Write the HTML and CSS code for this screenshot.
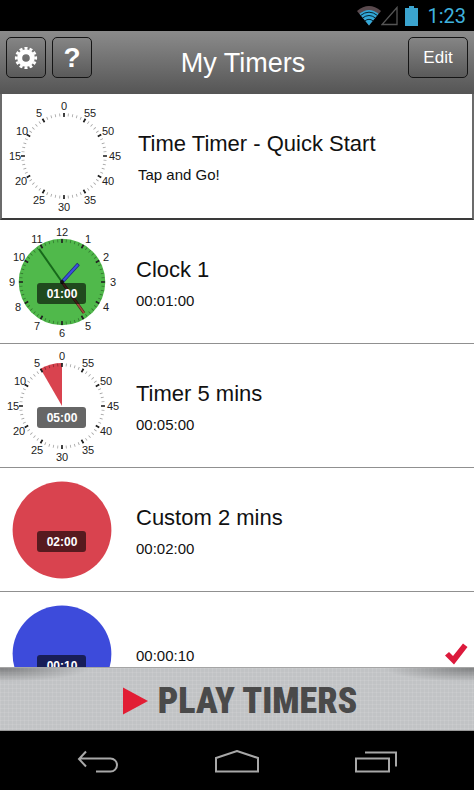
FILE: index.html
```html
<!DOCTYPE html>
<html lang="en">
<head>
<meta charset="utf-8">
<meta name="viewport" content="width=device-width, initial-scale=1">
<title>My Timers</title>
<link rel="stylesheet" href="styles.css">
</head>
<body>
<svg class="defs" aria-hidden="true">
  <defs>
    <g id="ticks">
      <circle r="41.2" pathLength="600" class="tick-minor"/>
      <circle r="41" pathLength="600" class="tick-major"/>
    </g>
    <g id="minutes" class="dial-num">
      <text x="0" y="-46">0</text><text x="26" y="-39">55</text><text x="44" y="-21">50</text>
      <text x="51" y="4">45</text><text x="44" y="29">40</text><text x="26" y="48">35</text>
      <text x="0" y="55">30</text><text x="-25" y="48">25</text><text x="-43" y="29">20</text>
      <text x="-49" y="4">15</text><text x="-42" y="-21">10</text><text x="-25" y="-39">5</text>
    </g>
  </defs>
</svg>

<div class="status">
  <svg width="24" height="20" viewBox="0 0 24 20" aria-label="Wi-Fi">
    <path d="M0 5 Q12 -5 24 5 L12 19.500Z" fill="#5a4a4e"/>
    <path d="M2.500 7.800 Q12 0 21.500 7.800 L12 19.500Z" fill="#33a8d8"/>
    <path d="M3.500 9.500 Q12 2.800 20.500 9.500 M5.500 12 Q12 7 18.500 12 M7.800 15 Q12 11.600 16.200 15" fill="none" stroke="#06222e" stroke-width="1"/>
  </svg>
  <svg width="17" height="20" viewBox="0 0 17 20" aria-label="No signal">
    <path d="M16 1.500V18.500H1Z" fill="none" stroke="#555" stroke-width="1.300"/>
  </svg>
  <svg class="battery" width="13" height="20" viewBox="0 0 13 20" aria-label="Battery">
    <path d="M4 0H9V2H13V20H0V2H4Z" fill="#3ba4cf"/>
  </svg>
  <span class="time">1:23</span>
</div>

<header class="header">
  <button class="btn icon-btn" aria-label="Settings">
    <svg width="24" height="24" viewBox="-12 -12 24 24">
      <circle r="6.300" fill="none" stroke="#fff" stroke-width="5"/>
      <circle r="9.700" fill="none" stroke="#fff" stroke-width="2.800" pathLength="120" stroke-dasharray="6 4" stroke-dashoffset="3"/>
    </svg>
  </button>
  <button class="btn icon-btn help" aria-label="Help">?</button>
  <h1>My Timers</h1>
  <button class="btn edit">Edit</button>
</header>

<main class="list">
  <button class="row quick">
    <svg class="dial" viewBox="-62 -60 124 120" aria-hidden="true">
      <use href="#ticks"/><use href="#minutes"/>
    </svg>
    <span class="info"><span class="name">Time Timer - Quick Start</span><span class="sub">Tap and Go!</span></span>
  </button>

  <button class="row">
    <svg class="dial" viewBox="-62 -60 124 120" aria-hidden="true">
      <circle r="43.300" fill="#50b94b"/>
      <use href="#ticks"/>
      <g class="dial-num">
        <text x="0" y="-46">12</text><text x="26" y="-39">1</text><text x="44" y="-21">2</text>
        <text x="51" y="4">3</text><text x="44" y="29">4</text><text x="26" y="48">5</text>
        <text x="0" y="55">6</text><text x="-25" y="48">7</text><text x="-44" y="29">8</text>
        <text x="-50" y="4">9</text><text x="-43" y="-21">10</text><text x="-25" y="-39">11</text>
      </g>
      <path d="M0 0L-23 -33" stroke="#17691b" stroke-width="2"/>
      <path d="M0 0L22 31" stroke="#4a2a1c" stroke-width="3"/>
      <path d="M0 0L22 31" stroke="#a1483a" stroke-width="1.600"/>
      <path d="M0 0L16.500 -18" stroke="#1e2c78" stroke-width="3.600"/>
      <path d="M1 -1L16 -17.500" stroke="#3c4fe0" stroke-width="2.200"/>
      <circle r="2" fill="#111"/>
      <rect class="pill" x="-25" y="1" width="49" height="21" rx="3"/>
      <text class="pill-text" x="0" y="16">01:00</text>
    </svg>
    <span class="info"><span class="name">Clock 1</span><span class="sub">00:01:00</span></span>
  </button>

  <button class="row">
    <svg class="dial" viewBox="-62 -60 124 120" aria-hidden="true">
      <path d="M0 0V-43A43 43 0 0 0 -21.500 -37.200Z" fill="#d9434f"/>
      <use href="#ticks"/><use href="#minutes"/>
      <rect class="pill" x="-25" y="1" width="49" height="21" rx="3"/>
      <text class="pill-text" x="0" y="16">05:00</text>
    </svg>
    <span class="info"><span class="name">Timer 5 mins</span><span class="sub">00:05:00</span></span>
  </button>

  <button class="row">
    <svg class="dial" viewBox="-62 -60 124 120" aria-hidden="true">
      <ellipse rx="49.400" ry="48.400" fill="#d9434f"/>
      <rect class="pill" x="-25" y="1" width="49" height="21" rx="3"/>
      <text class="pill-text" x="0" y="16">02:00</text>
    </svg>
    <span class="info"><span class="name">Custom 2 mins</span><span class="sub">00:02:00</span></span>
  </button>

  <button class="row">
    <svg class="dial" viewBox="-62 -60 124 120" aria-hidden="true">
      <ellipse rx="49.400" ry="48.400" fill="#3d4bdb"/>
      <rect class="pill" x="-25" y="1" width="49" height="21" rx="3"/>
      <text class="pill-text" x="0" y="16">00:10</text>
    </svg>
    <span class="info"><span class="sub">00:00:10</span></span>
    <svg class="check" width="24" height="22" viewBox="0 0 24 22" aria-label="Selected">
      <path d="M1 12.500L5 9L9 13L19 0.500L23.500 4L10 21.500Z" fill="#dc1a3c"/>
    </svg>
  </button>
</main>

<button class="play">
  <svg width="25" height="28" viewBox="0 0 25 28" aria-hidden="true"><path d="M0 0.500L25 14L0 27.500Z" fill="#e21d34"/></svg>
  <span>PLAY TIMERS</span>
</button>

<nav class="nav">
  <button aria-label="Back">
    <svg width="42" height="24" viewBox="0 0 42 24"><path d="M9 1.500L2 9L9 16.500M2 8.500H33.500A6.500 6.500 0 0 1 33.500 21.500H19"/></svg>
  </button>
  <button aria-label="Home">
    <svg width="46" height="24" viewBox="0 0 46 24"><path d="M2 21.500V8L23 1L44 8V21.500Z"/></svg>
  </button>
  <button aria-label="Recent apps">
    <svg width="44" height="24" viewBox="0 0 44 24"><path d="M2 8.500H35V21.500H2ZM11 2.500H42V16.500"/></svg>
  </button>
</nav>
</body>
</html>
```
FILE: styles.css
```css
* { box-sizing: border-box; }

body {
  margin: 0;
  height: 100vh;
  display: flex;
  flex-direction: column;
  overflow: hidden;
  background: #000;
  font-family: "Liberation Sans", Arial, sans-serif;
}

button {
  margin: 0;
  padding: 0;
  border: 0;
  background: none;
  color: inherit;
  font: inherit;
  cursor: pointer;
}

.defs { position: absolute; width: 0; height: 0; }

.status {
  flex: none;
  height: 31px;
  padding: 0 8px;
  display: flex;
  align-items: center;
  justify-content: flex-end;
  color: #3fb2de;
}
.battery { margin: 0 9px 0 7px; }
.time { font: 20px Roboto, sans-serif; }

.header {
  flex: none;
  height: 63px;
  padding: 6px;
  display: flex;
  align-items: flex-start;
  gap: 6px;
  color: #fff;
  background: linear-gradient(#8b8b8b, #555);
}
.header h1 {
  flex: 1;
  margin: 0;
  padding-right: 14px;
  align-self: center;
  text-align: center;
  font-size: 27px;
  line-height: 32px;
  font-weight: 400;
}
.btn {
  height: 41px;
  display: flex;
  align-items: center;
  justify-content: center;
  border: 1px solid #151515;
  border-radius: 5px;
  background: linear-gradient(#858585, #5a5a5a);
}
.icon-btn { width: 40px; }
.help { font-size: 28px; font-weight: 700; }
.edit { width: 60px; font-size: 17px; }

.list { flex: 1; min-height: 0; overflow: hidden; background: #fff; }
.row {
  width: 100%;
  height: 124px;
  padding-right: 6px;
  display: flex;
  align-items: center;
  gap: 12px;
  text-align: left;
  color: #111;
  border-bottom: 1px solid #909090;
}
.quick {
  height: 126px;
  border: 2px solid #6b6b6b;
  border-top: 0;
  border-bottom-color: #3a3a3a;
}
.dial { flex: none; width: 124px; height: 120px; }
.dial-num { font-size: 11px; text-anchor: middle; fill: #222; }
.tick-minor { fill: none; stroke: #000; stroke-opacity: 0.35; stroke-width: 3; stroke-dasharray: 2 8; stroke-dashoffset: 1; }
.tick-major { fill: none; stroke: #222; stroke-width: 4; stroke-dasharray: 4 46; stroke-dashoffset: 2; }
.pill { fill: #000; fill-opacity: 0.6; }
.pill-text { font-size: 12px; font-weight: 700; text-anchor: middle; fill: #fff; }

.info { flex: 1; padding-top: 4px; display: flex; flex-direction: column; gap: 8px; }
.name { font-size: 22px; line-height: 26px; }
.sub { font-size: 15px; line-height: 20px; }
.check { flex: none; }

.play {
  flex: none;
  height: 64px;
  padding: 4px 0 0 6px;
  display: flex;
  align-items: center;
  justify-content: center;
  gap: 10px;
  color: #4a4a4a;
  font-family: "Roboto Condensed", Roboto, sans-serif;
  font-size: 36px;
  font-weight: 900;
  line-height: 40px;
  border-top: 1px solid #a5a5a5;
  border-bottom: 1px solid #999;
  background:
    radial-gradient(90px 14px at 0 0, rgba(0, 0, 0, 0.35), transparent),
    radial-gradient(90px 14px at 100% 0, rgba(0, 0, 0, 0.35), transparent),
    repeating-linear-gradient(90deg, rgba(255, 255, 255, 0.09) 0 1px, transparent 1px 4px),
    repeating-linear-gradient(rgba(255, 255, 255, 0.09) 0 1px, transparent 1px 4px),
    #c1c3c5;
}

.nav {
  flex: none;
  height: 59px;
  padding: 3px 28px 0;
  display: grid;
  grid-template-columns: repeat(3, 1fr);
}
.nav button { display: flex; align-items: center; justify-content: center; }
.nav path { fill: none; stroke: #a8a8a8; stroke-width: 2; }
```
